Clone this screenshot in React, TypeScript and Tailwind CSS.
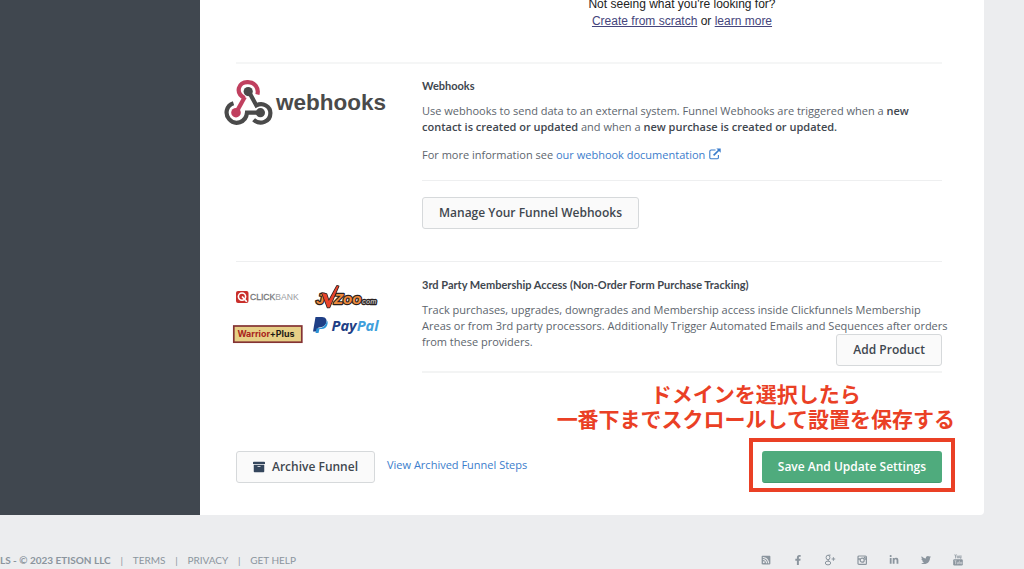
import React from 'react';
import { FaArchive, FaFacebookF, FaLinkedinIn, FaRssSquare, FaTwitter } from 'react-icons/fa';

const buttonClass =
  "h-8 rounded-[3px] border border-[#d6d9db] bg-[#fafafa] px-4 text-xs font-semibold text-[#3f474f] whitespace-nowrap";

const WebhooksLogo: React.FC = () => (
  <svg viewBox="0 0 164 46" className="w-[164px] h-[46px]" role="img" aria-label="webhooks">
    <g fill="none" strokeWidth="4.2">
      <path d="M20.5 18 C11 13 14 1.8 24 2.1 C31 2.2 35 8 33.4 14.5" stroke="#c0405f" />
      <path d="M20.8 17 L13 31" stroke="#c0405f" />
      <path d="M9.5 23.2 C2.2 25.5 0.7 34 5 39 C11 46 22 42.5 23 32.7 H36" stroke="#4a4a4a" />
      <path d="M25 12 L32.4 25.4 C39 22 46.4 26.5 46.4 33 C46.4 42 36 45.5 29.6 39.7" stroke="#4a4a4a" />
    </g>
    <circle cx="24.2" cy="11.6" r="4.6" fill="#4a4a4a" />
    <circle cx="12" cy="32.7" r="4.8" fill="#c0405f" />
    <circle cx="36.4" cy="32.7" r="4.6" fill="#4a4a4a" />
    <text x="52" y="29.5" fontFamily="Liberation Sans, sans-serif" fontSize="22.5" fontWeight="700" fill="#4a4a4a">
      webhooks
    </text>
  </svg>
);

const PartnerLogos: React.FC = () => (
  <svg viewBox="0 0 150 62" className="w-[150px] h-[62px]" role="img" aria-label="ClickBank, JVZoo, Warrior+Plus and PayPal">
    {/* ClickBank */}
    <rect x="4" y="7" width="12.5" height="12" rx="2" fill="#c92f2b" />
    <circle cx="10" cy="12.6" r="3.6" fill="none" stroke="#fff" strokeWidth="1.6" />
    <path d="M10 12.5 L14.8 17.8" stroke="#fff" strokeWidth="1.7" />
    <text x="18" y="16.4" fontFamily="Liberation Sans, sans-serif" fontSize="8.6" fill="#77797b">
      <tspan stroke="#77797b" strokeWidth="0.3">CLICK</tspan>
      <tspan fill="#9b9d9f">BANK</tspan>
    </text>

    {/* JVZoo */}
    <g fontFamily="Liberation Sans, sans-serif" fontWeight="700" fontStyle="italic" stroke="#2a2220" strokeWidth="2.4" paintOrder="stroke" strokeLinejoin="round">
      <text x="84" y="20" fontSize="15" fill="#ef8a3c">J</text>
      <text x="102" y="20" fontSize="15" fill="#ef8a3c">Z</text>
      <text x="111" y="20" fontSize="15" fill="#ef8a3c">oo</text>
      <text x="130" y="19.6" fontSize="7" fill="#b8b8b8">com</text>
      <path d="M90 9 L94.5 10 L96.8 17 L105 1.8 L106.6 2.2 L97.5 23.5 L95.5 23.5 Z" fill="#e8432b" strokeWidth="1.6" />
    </g>

    {/* Warrior+Plus */}
    <rect x="1.8" y="42" width="68" height="16.2" fill="#e6cf86" stroke="#843333" strokeWidth="1.7" />
    <text x="5.4" y="53.2" fontFamily="Inter, sans-serif" fontSize="8.9" fontWeight="700">
      <tspan fill="#a9261d">Warrior</tspan>
      <tspan fill="#1d1a16">+Plus</tspan>
    </text>

    {/* PayPal */}
    <path d="M83.5 33 H90 C94 33 95.5 36 94 39.5 C93 42 90 43.5 86.5 43.5 L85.5 47.5 H81 Z" fill="#1f3f86" />
    <path d="M94.8 36.2 C96.8 38 95.6 45 89.5 45 H87.5 L86.5 49 H83.5 L84.7 44.2 H87 C91.5 43.8 94.3 41 94.8 36.2 Z" fill="#2b93d6" />
    <text x="99.5" y="47" fontFamily="Open Sans, sans-serif" fontSize="14.6" fontWeight="700" fontStyle="italic">
      <tspan fill="#223f86">Pay</tspan>
      <tspan fill="#3f9fdc">Pal</tspan>
    </text>
  </svg>
);

const ExternalLinkIcon: React.FC = () => (
  <svg viewBox="0 0 12 12" className="inline-block w-3 h-3 ml-1 align-[-1px]" aria-hidden="true">
    <path d="M6.5 2 H2.2 Q0.8 2 0.8 3.4 V9.4 Q0.8 10.8 2.2 10.8 H8 Q9.4 10.8 9.4 9.4 V7" fill="none" stroke="currentColor" strokeWidth="1.1" />
    <path d="M4.6 7.4 L10 2" stroke="currentColor" strokeWidth="1.7" />
    <path d="M7.4 0.4 H11.7 V4.7 Z" fill="currentColor" />
  </svg>
);

const GooglePlusIcon: React.FC = () => (
  <svg viewBox="0 0 12 12" className="w-3 h-3" fill="none" stroke="currentColor" strokeWidth="1" aria-hidden="true">
    <ellipse cx="4" cy="3.5" rx="1.9" ry="2.3" />
    <path d="M4.5 1.1 H6.6 M4.6 5.7 Q3.4 6.4 5 7.2" />
    <ellipse cx="4" cy="9" rx="2.7" ry="1.9" />
    <path d="M9.4 3.2 V6.8 M7.6 5 H11.2" />
  </svg>
);

const InstagramIcon: React.FC = () => (
  <svg viewBox="0 0 12 12" className="w-3 h-3" aria-hidden="true">
    <rect x="2" y="2" width="8.4" height="8.4" rx="1" fill="none" stroke="currentColor" strokeWidth="1.2" />
    <path d="M2 5 H4 M8.4 5 H10.4" stroke="currentColor" strokeWidth="1.3" />
    <rect x="7.8" y="2.6" width="1.8" height="1.6" fill="currentColor" />
    <circle cx="6.2" cy="6.2" r="2" fill="none" stroke="currentColor" strokeWidth="1.2" />
  </svg>
);

const YoutubeIcon: React.FC = () => (
  <svg viewBox="0 0 12 12" className="w-3 h-3" fill="none" stroke="currentColor" strokeWidth="0.8" aria-hidden="true">
    <path d="M2.8 0.4 L3.6 2.4 L4.4 0.4 M3.6 2.2 V4.4 M7.8 1.4 V4 H9 M9 1.4 V4.4" />
    <ellipse cx="6" cy="2.9" rx="0.8" ry="1.2" />
    <rect x="1.2" y="5.2" width="9.6" height="6.2" rx="1.2" fill="currentColor" stroke="none" />
    <path d="M2.4 6.8 H4.6 M3.5 6.8 V10.2 M5.2 7.8 V9.8 H6.4 V7.8 M7.4 6.6 V9.9 M8.6 8.2 H9.8 V9.8 H8.6 Z" stroke="#ecedef" strokeWidth="0.5" />
  </svg>
);

const socialLinks = [
  { label: 'RSS', icon: <FaRssSquare className="w-[10px] h-[10px]" /> },
  { label: 'Facebook', icon: <FaFacebookF className="w-[10px] h-[10px]" /> },
  { label: 'Google Plus', icon: <GooglePlusIcon /> },
  { label: 'Instagram', icon: <InstagramIcon /> },
  { label: 'LinkedIn', icon: <FaLinkedinIn className="w-[10px] h-[10px]" /> },
  { label: 'Twitter', icon: <FaTwitter className="w-[10px] h-[10px]" /> },
  { label: 'YouTube', icon: <YoutubeIcon /> }
];

const footerLinks = ['TERMS', 'PRIVACY', 'GET HELP'];

const App: React.FC = () => {
  return (
    <div className="min-h-screen overflow-hidden bg-[#ecedef] font-['Open_Sans',sans-serif] text-[11px] leading-4 text-[#5d656d]">
      <div className="flex pr-10">
        <aside className="w-[200px] shrink-0 bg-[#40474f]" />

        <main className="min-w-0 flex-1 rounded-br bg-white pl-9 pr-[42px] pb-8">
          <div className="-mt-1 ml-[186px] text-center font-['Liberation_Sans',sans-serif] text-xs leading-[17px] text-[#222]">
            <p>Not seeing what you're looking for?</p>
            <p>
              <a href="#create" className="text-[#45457c] underline">Create from scratch</a> or{' '}
              <a href="#learn" className="text-[#45457c] underline">learn more</a>
            </p>
          </div>

          <section className="mt-8 flex border-t-2 border-[#f5f6f6] pt-[14px]">
            <div className="w-[186px] shrink-0 pt-[2px]">
              <div className="-ml-3">
                <WebhooksLogo />
              </div>
            </div>
            <div className="min-w-0 flex-1">
              <h2 className="font-[Lato,sans-serif] font-bold text-[#3f474f]">Webhooks</h2>
              <p className="mt-[9px]">
                Use webhooks to send data to an external system. Funnel Webhooks are triggered when a{' '}
                <strong className="font-semibold text-[#3f474f]">new contact is created or updated</strong> and when a{' '}
                <strong className="font-semibold text-[#3f474f]">new purchase is created or updated.</strong>
              </p>
              <p className="mt-3 border-b border-[#eeeff0] pb-[17px]">
                For more information see{' '}
                <a href="#docs" className="text-[#3b7dcc]">
                  our webhook documentation
                  <ExternalLinkIcon />
                </a>
              </p>
              <button type="button" className={`mt-4 ${buttonClass}`}>
                Manage Your Funnel Webhooks
              </button>
            </div>
          </section>

          <section className="mt-8 flex border-t border-[#eeeff0] pt-[15px]">
            <div className="w-[186px] shrink-0 pt-[7px]">
              <div className="-ml-1">
                <PartnerLogos />
              </div>
            </div>
            <div className="min-w-0 flex-1 border-b-2 border-[#f3f4f4] pb-[5px]">
              <h2 className="font-[Lato,sans-serif] font-bold text-[#3f474f]">
                3rd Party Membership Access (Non-Order Form Purchase Tracking)
              </h2>
              <p className="mt-[9px] whitespace-nowrap">
                Track purchases, upgrades, downgrades and Membership access inside Clickfunnels Membership
                <br />
                Areas or from 3rd party processors. Additionally Trigger Automated Emails and Sequences after orders
                <br />
                from these providers.
              </p>
              <div className="-mt-4 flex justify-end">
                <button type="button" className={buttonClass}>
                  Add Product
                </button>
              </div>
            </div>
          </section>

          <div className="mt-2 flex justify-end">
            <p className="-mr-[13px] text-center font-['Noto_Sans_CJK_JP',sans-serif] text-[21px] leading-[25px] font-bold text-[#ea4025]">
              ドメインを選択したら
              <br />
              一番下までスクロールして設置を保存する
            </p>
          </div>

          <div className="mt-5 flex items-center">
            <button type="button" className={`flex items-center gap-[7px] ${buttonClass}`}>
              <FaArchive className="w-3 h-3 text-[#34465c]" />
              Archive Funnel
            </button>
            <a href="#archived" className="mb-1 ml-3 text-[#3b7dcc]">View Archived Funnel Steps</a>
            <div className="relative ml-auto">
              <button
                type="button"
                className="block h-8 rounded-[3px] border-b border-[#43996e] bg-[#4fab7d] px-4 text-xs font-semibold whitespace-nowrap text-white"
              >
                Save And Update Settings
              </button>
              <div className="pointer-events-none absolute -inset-x-[13px] -top-[13px] -bottom-[9px] border-4 border-[#ea4025]" />
            </div>
          </div>
        </main>
      </div>

      <footer className="mt-[37px] flex items-center justify-between pr-[60px] font-[Lato,sans-serif] text-[10px] text-[#8b959e]">
        <div className="flex items-center">
          <span className="font-bold">LS - © 2023 ETISON LLC</span>
          {footerLinks.map((link) => (
            <React.Fragment key={link}>
              <span className="w-[22px] text-center">|</span>
              <a href="#footer">{link}</a>
            </React.Fragment>
          ))}
        </div>
        <nav className="flex items-center gap-5">
          {socialLinks.map((social) => (
            <a key={social.label} href="#social" aria-label={social.label} className="flex w-3 justify-center">
              {social.icon}
            </a>
          ))}
        </nav>
      </footer>
    </div>
  );
};

export default App;
